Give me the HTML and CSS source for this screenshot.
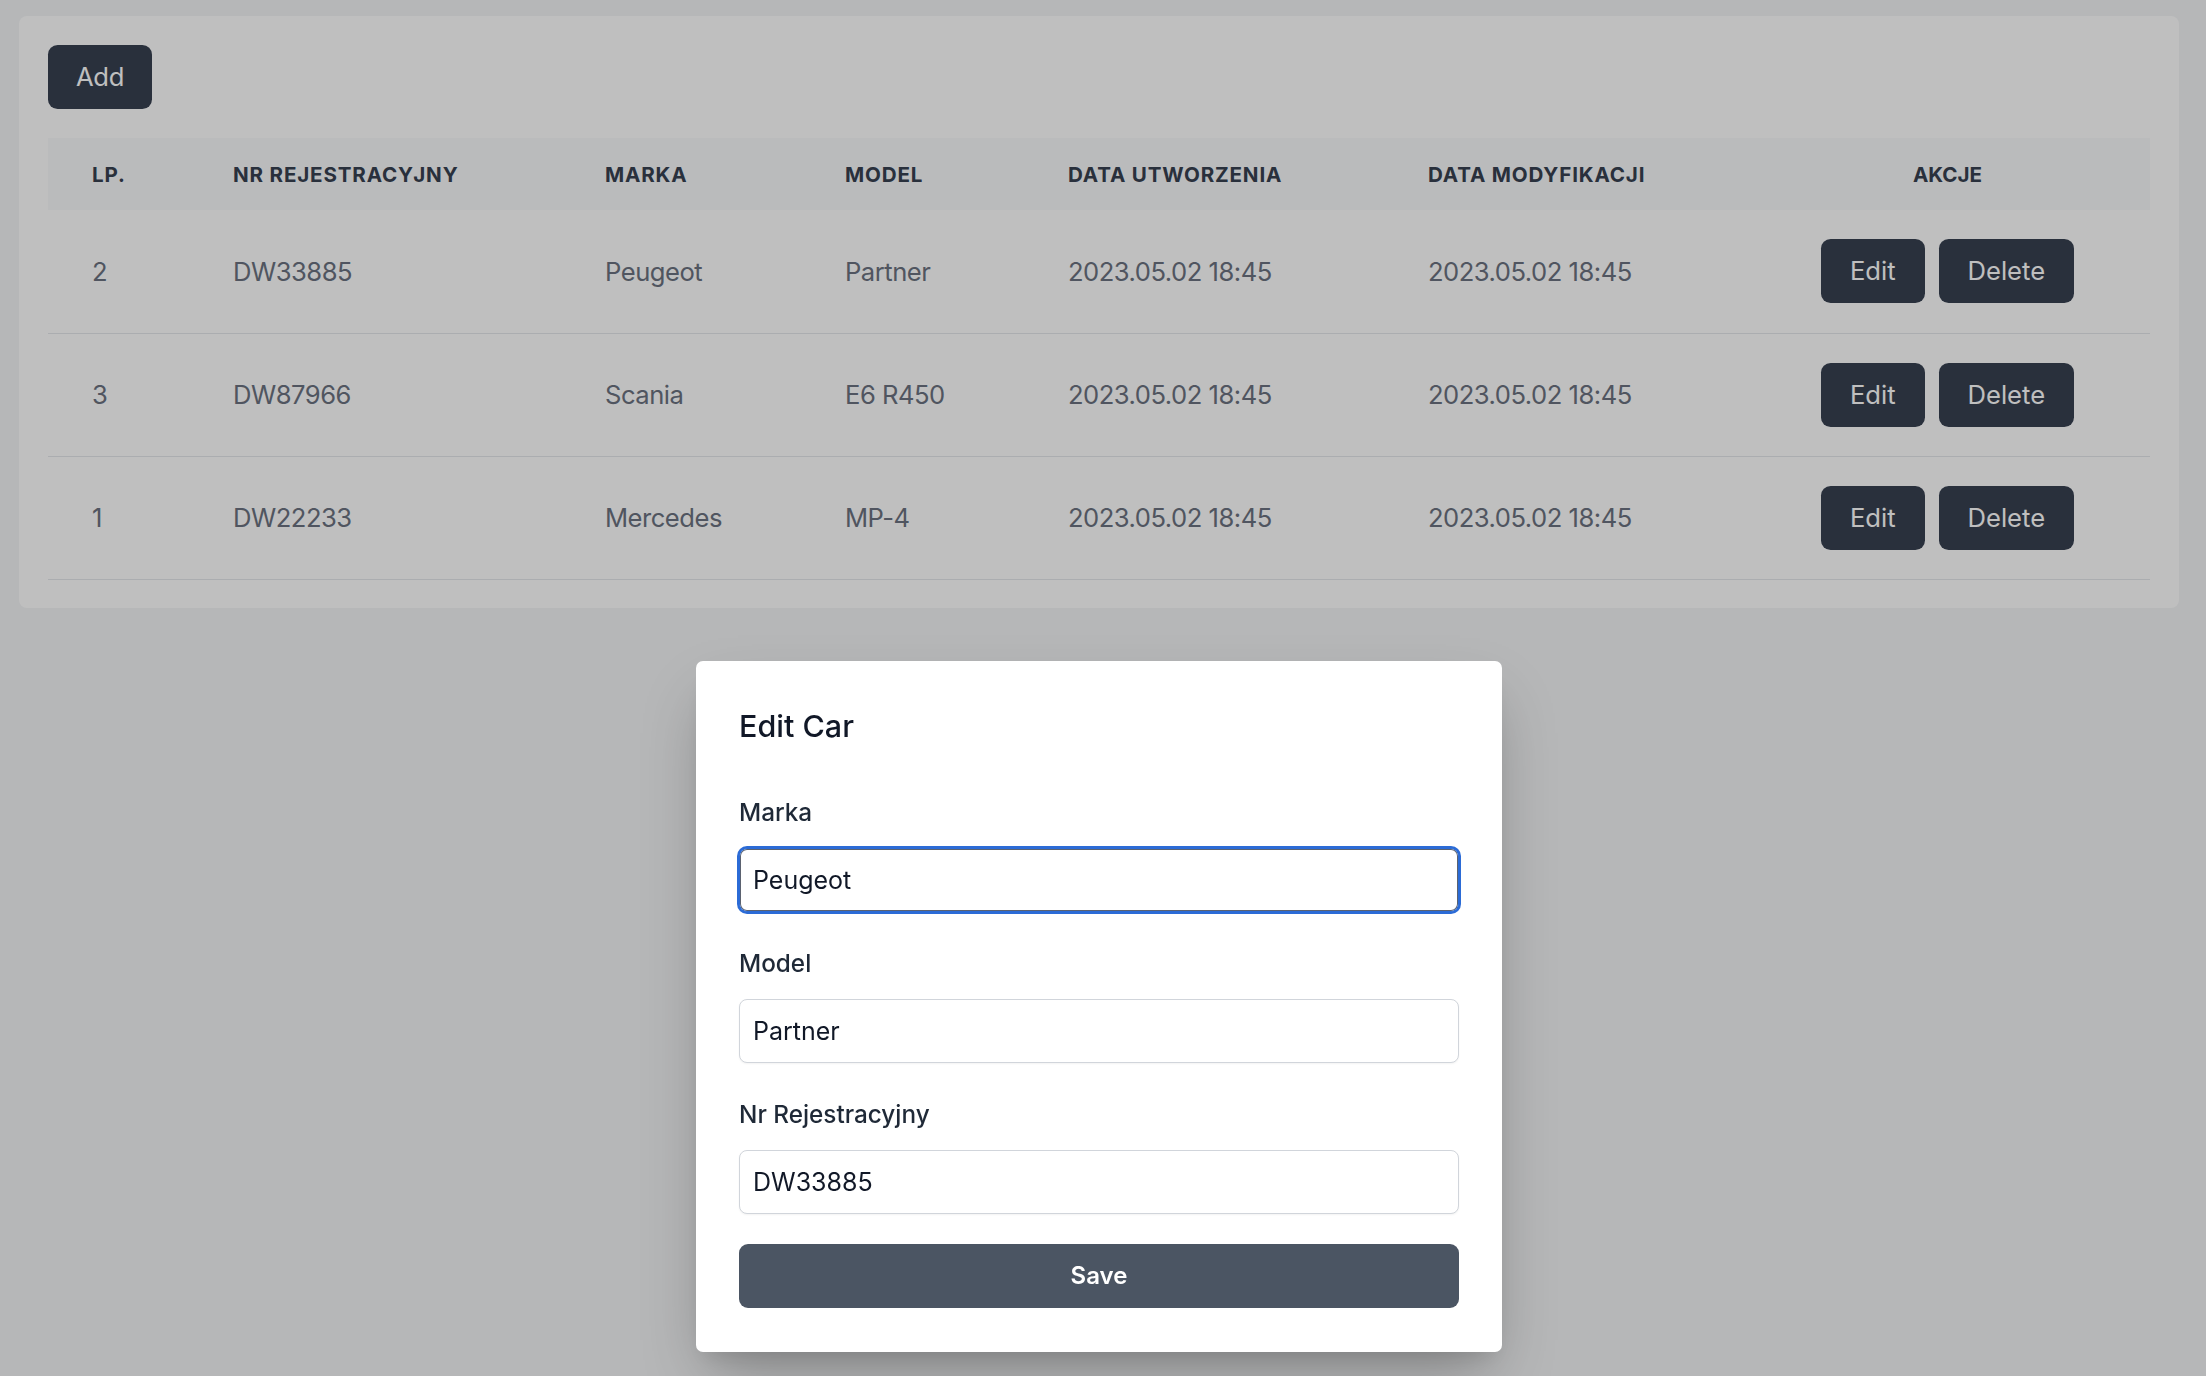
FILE: index.html
```html
<!DOCTYPE html>
<html lang="pl">
<head>
<meta charset="utf-8">
<title>Cars</title>
<link rel="stylesheet" href="styles.css">
</head>
<body>
<div class="page">
  <div class="card">
    <button class="btn btn-dark btn-add">Add</button>
    <table class="cars">
      <colgroup>
        <col class="c-lp"><col class="c-nr"><col class="c-marka"><col class="c-model"><col class="c-date"><col class="c-date2"><col class="c-akcje">
      </colgroup>
      <thead>
        <tr>
          <th>Lp.</th>
          <th>Nr rejestracyjny</th>
          <th>Marka</th>
          <th>Model</th>
          <th>Data utworzenia</th>
          <th>Data modyfikacji</th>
          <th class="center">Akcje</th>
        </tr>
      </thead>
      <tbody>
        <tr>
          <td>2</td><td>DW33885</td><td>Peugeot</td><td>Partner</td><td>2023.05.02 18:45</td><td>2023.05.02 18:45</td>
          <td class="center"><div class="actions"><button class="btn btn-dark">Edit</button><button class="btn btn-dark">Delete</button></div></td>
        </tr>
        <tr>
          <td>3</td><td>DW87966</td><td>Scania</td><td>E6 R450</td><td>2023.05.02 18:45</td><td>2023.05.02 18:45</td>
          <td class="center"><div class="actions"><button class="btn btn-dark">Edit</button><button class="btn btn-dark">Delete</button></div></td>
        </tr>
        <tr>
          <td>1</td><td>DW22233</td><td>Mercedes</td><td>MP-4</td><td>2023.05.02 18:45</td><td>2023.05.02 18:45</td>
          <td class="center"><div class="actions"><button class="btn btn-dark">Edit</button><button class="btn btn-dark">Delete</button></div></td>
        </tr>
      </tbody>
    </table>
  </div>

  <div class="backdrop"></div>

  <div class="modal">
    <h2 class="modal-title">Edit Car</h2>
    <div class="field">
      <label class="label" for="marka">Marka</label>
      <input class="input focused" id="marka" type="text" value="Peugeot">
    </div>
    <div class="field">
      <label class="label" for="model">Model</label>
      <input class="input" id="model" type="text" value="Partner">
    </div>
    <div class="field">
      <label class="label" for="nr">Nr Rejestracyjny</label>
      <input class="input" id="nr" type="text" value="DW33885">
    </div>
    <button class="btn-save">Save</button>
  </div>
</div>
</body>
</html>
```

FILE: styles.css
```css
* { box-sizing: border-box; }

html, body {
  margin: 0;
  padding: 0;
}

body {
  background: #f3f4f6;
  font-family: Inter, "Noto Sans", "Liberation Sans", sans-serif;
  color: #111827;
}

.page {
  padding: 16px 27px 0 19px;
  min-height: 1376px;
}

.card {
  background: #ffffff;
  border-radius: 8px;
  padding: 29px 29px 28px;
}

.btn {
  font-family: inherit;
  border: 0;
  cursor: pointer;
}

.btn-dark {
  background: #374151;
  color: #ffffff;
  height: 64px;
  padding: 0 29px;
  border-radius: 9.6px;
  font-size: 25.6px;
  line-height: 1;
}

.btn-add {
  display: block;
  padding: 0 28px;
  letter-spacing: -0.3px;
}

.cars {
  margin-top: 29px;
  width: 2102px;
  border-collapse: collapse;
  table-layout: fixed;
}

.c-lp { width: 141px; }
.c-nr { width: 372px; }
.c-marka { width: 240px; }
.c-model { width: 223px; }
.c-date { width: 360px; }
.c-date2 { width: 361px; }
.c-akcje { width: 405px; }

.cars thead tr {
  background: #f9fafb;
}

.cars th {
  height: 72px;
  padding: 0 0 0 44px;
  text-align: left;
  font-size: 20.6px;
  font-weight: 700;
  letter-spacing: 0.04em;
  text-transform: uppercase;
  color: #374151;
  white-space: nowrap;
}

.cars td {
  height: 123px;
  padding: 0 0 0 44px;
  font-size: 25.6px;
  letter-spacing: -0.5px;
  color: #6b7280;
  border-bottom: 1px solid #e5e7eb;
  white-space: nowrap;
}

.cars th.center,
.cars td.center {
  text-align: center;
  padding: 0;
  letter-spacing: normal;
}

.actions {
  display: inline-flex;
  gap: 14px;
  vertical-align: middle;
}

.backdrop {
  position: fixed;
  inset: 0;
  background: rgba(0, 0, 0, 0.25);
  z-index: 10;
}

.modal {
  position: relative;
  z-index: 20;
  width: 806px;
  margin: 53px auto 0;
  background: #ffffff;
  border-radius: 7px;
  padding: 45px 43px 44px;
  box-shadow: 0 30px 60px -12px rgba(0, 0, 0, 0.28), 0 12px 20px -8px rgba(0, 0, 0, 0.1);
}

.modal-title {
  margin: 0 0 49px;
  font-size: 30.5px;
  line-height: 40px;
  font-weight: 500;
  color: #111827;
}

.field {
  display: flex;
  flex-direction: column;
  margin-bottom: 34px;
}

.field:last-of-type {
  margin-bottom: 30px;
}

.label {
  font-size: 24.3px;
  line-height: 35px;
  font-weight: 500;
  color: #1f2937;
  margin-bottom: 18px;
}

.input {
  height: 64px;
  width: 100%;
  border: 1px solid #d1d5db;
  border-radius: 8px;
  padding: 0 13px;
  font-family: inherit;
  font-size: 25px;
  color: #111827;
  background: #ffffff;
  box-shadow: 0 1px 2px rgba(0, 0, 0, 0.05);
  outline: none;
}

.input.focused {
  border-color: #2b6bd6;
  box-shadow: 0 0 0 2px #2b6bd6, inset 0 0 0 1px #5b6270;
}

.btn-save {
  display: block;
  width: 100%;
  height: 64px;
  border: 0;
  border-radius: 9px;
  background: #4b5563;
  color: #ffffff;
  font-family: inherit;
  font-size: 24px;
  font-weight: 600;
  cursor: pointer;
}
```
